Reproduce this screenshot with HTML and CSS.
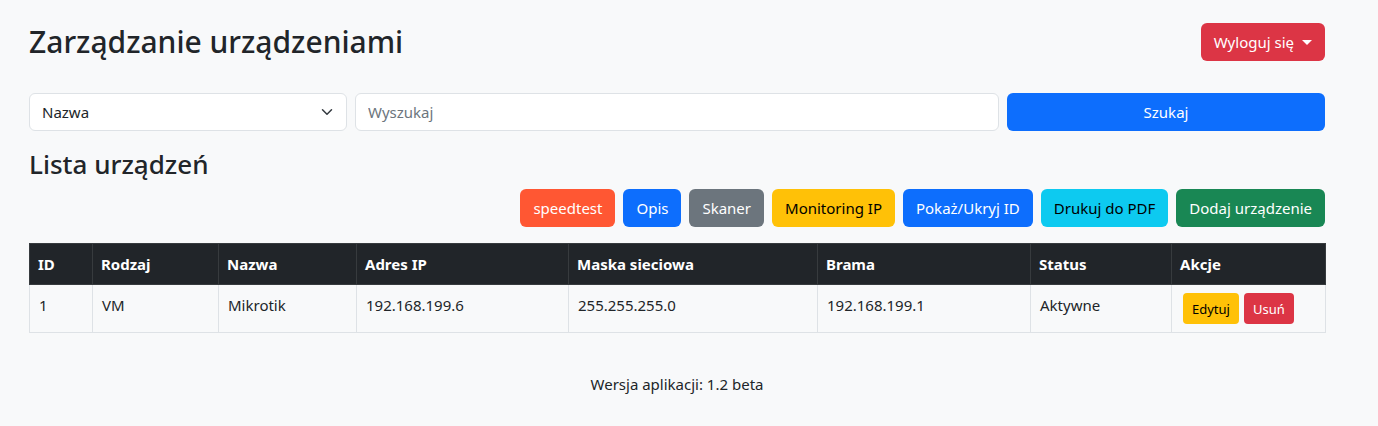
FILE: index.html
```html
<!DOCTYPE html>
<html lang="pl">
<head>
<meta charset="utf-8">
<title>Zarządzanie urządzeniami</title>
<link rel="stylesheet" href="styles.css">
</head>
<body>
<div class="page">
  <header class="top">
    <h1 class="title">Zarządzanie urządzeniami</h1>
    <button class="btn btn-danger dropdown-toggle">Wyloguj się</button>
  </header>

  <form class="search">
    <div class="select-wrap">
      <select class="select">
        <option>Nazwa</option>
      </select>
      <svg class="chev" width="16" height="12" viewBox="0 0 16 16"><path d="m2 5 6 6 6-6" fill="none" stroke="#343a40" stroke-linecap="round" stroke-linejoin="round" stroke-width="2"/></svg>
    </div>
    <input class="input" type="text" placeholder="Wyszukaj">
    <button type="button" class="btn btn-primary">Szukaj</button>
  </form>

  <h2 class="subtitle">Lista urządzeń</h2>
  <div class="toolbar">
    <button class="btn btn-speed">speedtest</button>
    <button class="btn btn-primary">Opis</button>
    <button class="btn btn-secondary">Skaner</button>
    <button class="btn btn-warning">Monitoring IP</button>
    <button class="btn btn-primary">Pokaż/Ukryj ID</button>
    <button class="btn btn-info">Drukuj do PDF</button>
    <button class="btn btn-success">Dodaj urządzenie</button>
  </div>

  <table class="table">
    <thead>
      <tr>
        <th class="c-id">ID</th>
        <th class="c-type">Rodzaj</th>
        <th class="c-name">Nazwa</th>
        <th class="c-ip">Adres IP</th>
        <th class="c-mask">Maska sieciowa</th>
        <th class="c-gw">Brama</th>
        <th class="c-status">Status</th>
        <th class="c-act">Akcje</th>
      </tr>
    </thead>
    <tbody>
      <tr>
        <td>1</td>
        <td>VM</td>
        <td>Mikrotik</td>
        <td>192.168.199.6</td>
        <td>255.255.255.0</td>
        <td>192.168.199.1</td>
        <td>Aktywne</td>
        <td><span class="actions"><button class="btn btn-sm btn-warning">Edytuj</button><button class="btn btn-sm btn-danger">Usuń</button></span></td>
      </tr>
    </tbody>
  </table>

  <footer class="footer">Wersja aplikacji: 1.2 beta</footer>
</div>
</body>
</html>
```
FILE: styles.css
```css
* { box-sizing: border-box; }
html, body { margin: 0; padding: 0; }
body {
  background: #f8f9fa;
  color: #212529;
  font-family: "Noto Sans", "Open Sans", sans-serif;
  font-size: 15px;
  line-height: 24px;
}
.page {
  width: 1296px;
  margin-left: 29px;
  padding-top: 23px;
}
.top {
  display: flex;
  justify-content: space-between;
  align-items: center;
  height: 38px;
}
.title {
  margin: 0;
  font-size: 30px;
  font-weight: 500;
  line-height: 38px;
}
.btn {
  display: inline-flex;
  align-items: center;
  justify-content: center;
  height: 38px;
  padding: 0 12px;
  border: 1px solid transparent;
  border-radius: 6px;
  font-family: inherit;
  font-size: 15px;
  line-height: 24px;
  color: #fff;
  cursor: pointer;
  white-space: nowrap;
}
.btn-sm {
  height: 31px;
  padding: 0 8px;
  font-size: 13px;
  border-radius: 4px;
}
.btn-danger { background: #dc3545; }
.btn-primary { background: #0d6efd; }
.btn-secondary { background: #6c757d; }
.btn-warning { background: #ffc107; color: #000; }
.btn-info { background: #0dcaf0; color: #000; }
.btn-success { background: #198754; }
.btn-speed { background: #ff5733; }
.dropdown-toggle::after {
  content: "";
  display: inline-block;
  margin-left: 8px;
  border-top: 5px solid;
  border-right: 5px solid transparent;
  border-left: 5px solid transparent;
  border-bottom: 0;
}
.search {
  display: grid;
  grid-template-columns: 318px 1fr 318px;
  gap: 8px;
  margin-top: 32px;
}
.select-wrap { position: relative; }
.select, .input {
  width: 100%;
  height: 38px;
  padding: 0 12px;
  border: 1px solid #dee2e6;
  border-radius: 6px;
  background: #fff;
  font-family: inherit;
  font-size: 15px;
  color: #212529;
  appearance: none;
  -webkit-appearance: none;
}
.input::placeholder { color: #6c757d; }
.chev {
  position: absolute;
  right: 12px;
  top: 13px;
  pointer-events: none;
}
.subtitle {
  margin: 16px 0 8px;
  font-size: 26px;
  font-weight: 500;
  line-height: 34px;
}
.toolbar {
  display: flex;
  justify-content: flex-end;
  gap: 8px;
}
.table {
  width: 100%;
  margin-top: 16px;
  border-collapse: collapse;
  table-layout: fixed;
}
.table th, .table td {
  padding: 8px;
  text-align: left;
  vertical-align: top;
  border: 1px solid #dee2e6;
}
.table th {
  background: #212529;
  color: #fff;
  font-weight: 700;
  border-color: #373b3e;
}
.table td {
  background: #f8f9fa;
  padding-left: 9px;
}
.actions {
  display: flex;
  gap: 5px;
  padding-left: 2px;
}
.c-id { width: 63px; }
.c-type { width: 126px; }
.c-name { width: 138px; }
.c-ip { width: 212px; }
.c-mask { width: 249px; }
.c-gw { width: 213px; }
.c-status { width: 141px; }
.c-act { width: 154px; }
.footer {
  margin-top: 39px;
  text-align: center;
}
```
